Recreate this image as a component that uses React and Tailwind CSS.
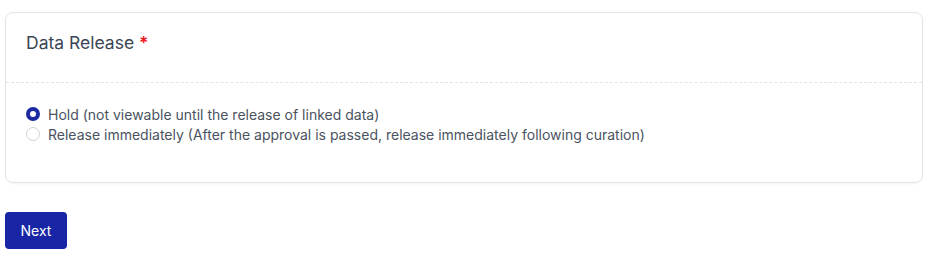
import React, { useState } from 'react';

const options = [
    { value: 'hold', label: 'Hold (not viewable until the release of linked data)' },
    { value: 'immediate', label: 'Release immediately (After the approval is passed, release immediately following curation)' },
];

export default function App() {
    const [release, setRelease] = useState('hold');

    return (
        <div className="min-h-screen bg-white pt-3 pl-[5px] pr-[9px]" style={{ fontFamily: 'Inter, "Noto Sans", sans-serif' }}>
            <div className="rounded-lg border border-[#e3e4e8] bg-white shadow-[0_1px_3px_rgba(0,0,0,0.04)]">
                <div className="h-[70px] border-b border-dashed border-[#e3e4e8] px-5 pt-[19px]">
                    <h3 className="text-[17.5px] leading-[22px] text-[#3b4757]">
                        Data Release <span className="font-semibold text-[#f0141e]">*</span>
                    </h3>
                </div>
                <div className="px-5 pt-[21px] pb-[38px]">
                    {options.map(opt => (
                        <label key={opt.value} className="flex h-5 cursor-pointer items-center gap-2 text-[14px] text-[#4a5361]">
                            <input
                                type="radio"
                                name="release"
                                value={opt.value}
                                checked={release === opt.value}
                                onChange={() => setRelease(opt.value)}
                                className="sr-only"
                            />
                            <span
                                className={`h-[14px] w-[14px] shrink-0 rounded-full bg-white ${release === opt.value
                                    ? 'border-[4px] border-[#1b2aa0]'
                                    : 'border border-[#cfd2d8]'
                                    }`}
                            ></span>
                            <span>{opt.label}</span>
                        </label>
                    ))}
                </div>
            </div>
            <button className="mt-[29px] h-[37px] w-[62px] rounded bg-[#1826a6] text-[14px] text-white">
                Next
            </button>
        </div>
    );
}
